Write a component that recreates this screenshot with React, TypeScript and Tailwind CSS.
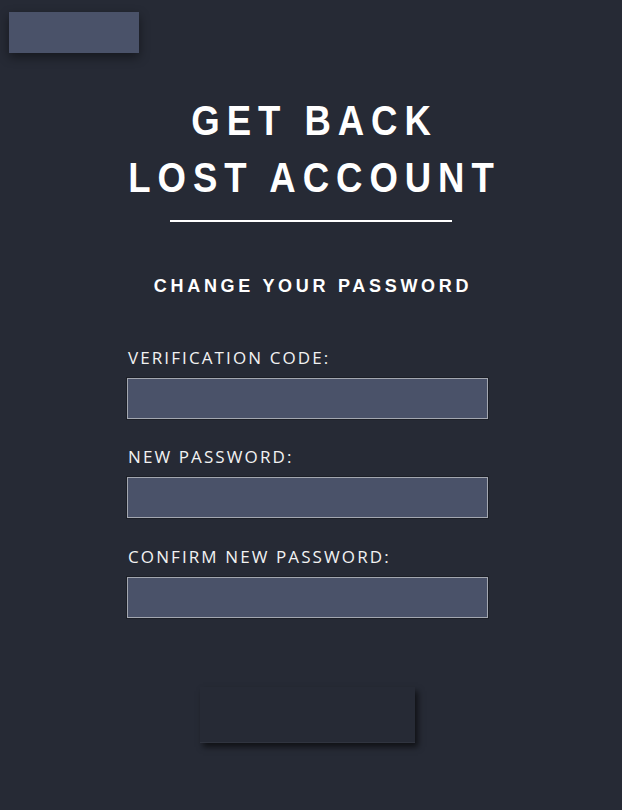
import React from "react";

export default function App() {
  const labelCls =
    "pl-[1px] text-[17px] leading-[20px] tracking-[2.1px] text-[#f2f2f2] mb-[10px]";
  const inputCls =
    "block w-[361px] h-[41px] bg-[#4a5269] border border-[#a3a7b0] shadow-[0_0_0_1px_#1c1f27] outline-none";
  return (
    <div className="w-[622px] h-[810px] bg-[#262a35] flex flex-col items-center relative" style={{ fontFamily: '"Liberation Sans", Arial, sans-serif' }}>
      <div className="absolute left-[9px] top-[12px] w-[130px] h-[41px] bg-[#4a5269] shadow-[0_4px_10px_rgba(0,0,0,0.45)]" />
      <h1 className="mt-[92px] text-center text-white font-bold text-[42px] leading-[57px] tracking-[8px] pl-[8px] scale-x-[0.87]">
        GET BACK
        <br />
        LOST ACCOUNT
      </h1>
      <div className="mt-[14px] w-[282px] h-[2px] bg-white" />
      <h2 className="mt-[53px] text-white font-bold text-[18px] leading-[22px] tracking-[3.7px] pl-[4px]">
        CHANGE YOUR PASSWORD
      </h2>
      <div className="mt-[51px] mr-[7px] w-[361px] flex flex-col" style={{ fontFamily: '"Open Sans", sans-serif' }}>
        <label className={labelCls}>VERIFICATION CODE:</label>
        <input className={inputCls} />
        <label className={labelCls + " mt-[28px]"}>NEW PASSWORD:</label>
        <input type="password" className={inputCls} />
        <label className={labelCls + " mt-[29px]"}>CONFIRM NEW PASSWORD:</label>
        <input type="password" className={inputCls} />
      </div>
      <button className="mt-[69px] mr-[7px] w-[215px] h-[56px] bg-[#262a35] shadow-[3px_4px_6px_rgba(0,0,0,0.6)] border-b border-[#30343f]" />
    </div>
  );
}
